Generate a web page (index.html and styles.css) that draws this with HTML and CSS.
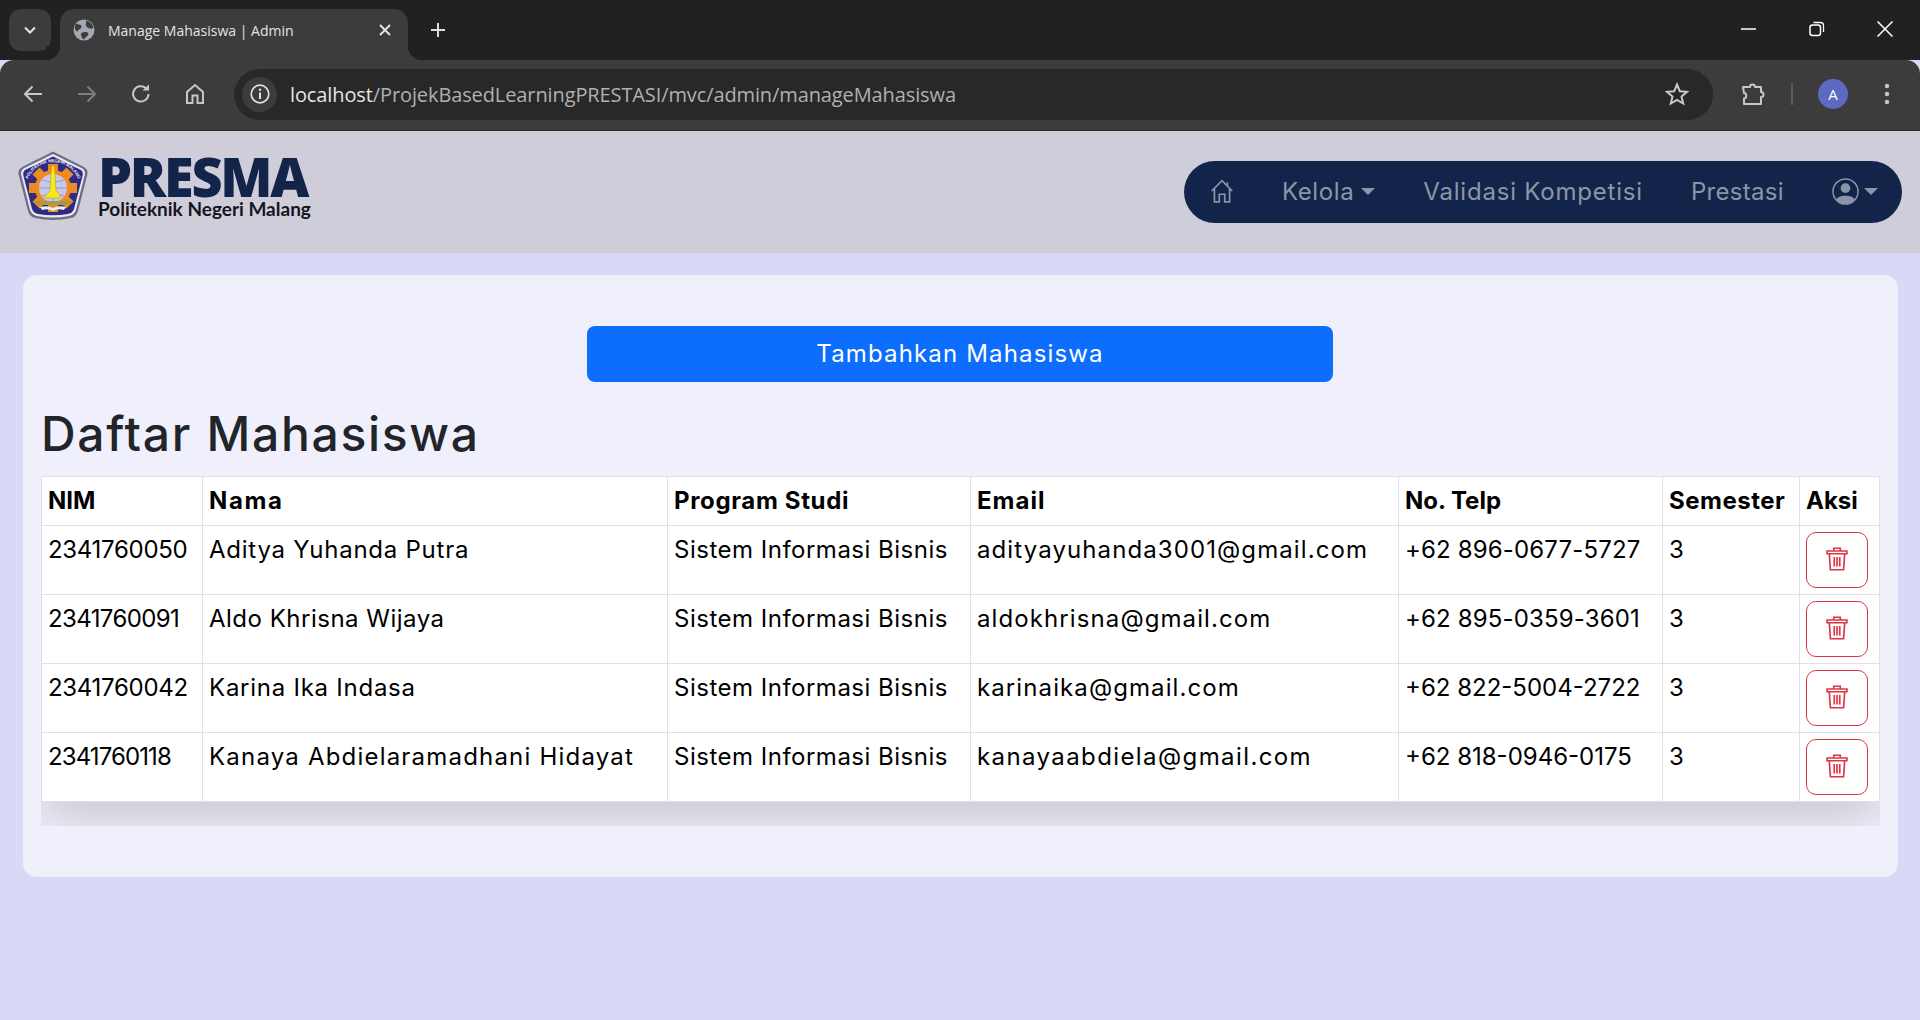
FILE: index.html
```html
<!DOCTYPE html>
<html lang="id">
<head>
<meta charset="utf-8">
<title>Manage Mahasiswa | Admin</title>
<link rel="stylesheet" href="styles.css">
</head>
<body>
<div class="tabstrip">
  <button class="tablist"><svg class="ico16" viewBox="0 0 16 16"><path d="M3 5.500 8 10.500 13 5.500" fill="none" stroke="#e6e6e6" stroke-width="2"/></svg></button>
  <div class="tab">
    <svg class="favicon" viewBox="0 0 22 22"><circle cx="11" cy="11" r="10.500" fill="#a3a9b2"/><path d="M3 4.500C6 6 8 5 8.500 7.500 9 10 5 10 4.500 12.500 2 12 1 8 3 4.500ZM13 1.500C16 2 20 5 20.500 9 17 10.500 14.500 9 13 7 12 5 14 3.500 13 1.500ZM8 14.500C11 12.500 15 12.500 15.500 15 15 17.500 12 18 11 20.500 9 20 8 17 8 14.500Z" fill="#3c3c3c"/></svg>
    <span class="tabtitle">Manage Mahasiswa | Admin</span>
    <svg class="tabclose" viewBox="0 0 14 14"><path d="M2 2 12 12M12 2 2 12" stroke="#e6e6e6" stroke-width="1.800"/></svg>
  </div>
  <svg class="newtab" viewBox="0 0 16 16"><path d="M8 1V15M1 8H15" stroke="#dcdcdc" stroke-width="2"/></svg>
  <div class="winctl">
    <svg class="winbtn" viewBox="0 0 16 16"><path d="M0 8H15" stroke="#fff" stroke-width="1.500"/></svg>
    <svg class="winbtn" viewBox="0 0 16 16"><rect x="1" y="4" width="10.500" height="10.500" rx="2.500" fill="none" stroke="#fff" stroke-width="1.500"/><path d="M4.500 1.500H11.500A3 3 0 0 1 14.500 4.500V11" fill="none" stroke="#fff" stroke-width="1.300"/></svg>
    <svg class="winbtn" viewBox="0 0 16 16"><path d="M.5.500 15.500 15.500M15.500.500 .5 15.500" stroke="#fff" stroke-width="1.500"/></svg>
  </div>
</div>
<div class="toolbar">
  <svg class="tool" viewBox="0 0 22 22"><path d="M20 11H3M10.500 3.500 3 11 10.500 18.500" fill="none" stroke="#c7c7c7" stroke-width="2"/></svg>
  <svg class="tool" viewBox="0 0 22 22"><path d="M2 11H19M11.500 3.500 19 11 11.500 18.500" fill="none" stroke="#7d7d7d" stroke-width="2"/></svg>
  <svg class="tool" viewBox="0 0 22 22"><path d="M18.500 11A7.700 7.700 0 1 1 16 5.200" fill="none" stroke="#c7c7c7" stroke-width="2"/><path d="M12.500 7.500H19V1.500Z" fill="#c7c7c7"/></svg>
  <svg class="tool" viewBox="0 0 22 22"><path d="M3 20V9L11 2 19 9V20H13.500V12.500H8.500V20Z" fill="none" stroke="#c7c7c7" stroke-width="2"/></svg>
  <div class="omnibox">
    <span class="chip"><svg class="chipico" viewBox="0 0 20 20"><circle cx="10" cy="10" r="8.800" fill="none" stroke="#e0e0e0" stroke-width="1.700"/><path d="M10 8.500V15" stroke="#e0e0e0" stroke-width="2"/><circle cx="10" cy="5.800" r="1.200" fill="#e0e0e0"/></svg></span>
    <span class="url"><span class="host">localhost</span>/ProjekBasedLearningPRESTASI/mvc/admin/manageMahasiswa</span>
    <svg class="star" viewBox="0 0 24 24"><path d="M12 2.500 14.800 9.200 22 9.800 16.500 14.500 18.200 21.500 12 17.800 5.800 21.500 7.500 14.500 2 9.800 9.200 9.200Z" fill="none" stroke="#c7c7c7" stroke-width="2"/></svg>
  </div>
  <svg class="ext" viewBox="0 0 24 24"><path d="M2 5H9A2.500 2.500 0 0 1 14 5H20V10A2.500 2.500 0 0 1 20 15V22H3V16.500C6 16.500 6 11 3 11Z" fill="none" stroke="#c7c7c7" stroke-width="2" stroke-linejoin="round"/></svg>
  <span class="tsep"></span>
  <span class="avatar">A</span>
  <svg class="dots" viewBox="0 0 6 24"><circle cx="3" cy="4" r="2.200" fill="#c7c7c7"/><circle cx="3" cy="12" r="2.200" fill="#c7c7c7"/><circle cx="3" cy="20" r="2.200" fill="#c7c7c7"/></svg>
</div>
<header class="navbar">
  <div class="brand">
    <svg class="emblem" viewBox="0 0 70 70">
      <path d="M35 .5 66 16Q71 19 69 25L60 60Q58 66 53 67 35 71 17 67 12 66 10 60L1 25Q-1 19 4 16Z" fill="#6f6c86"/>
      <path d="M35 3 64.500 17.500Q68 20 66.500 25L58 59Q56 64 51 65 35 68 19 65 14 64 12 59L3.500 25Q2 20 5.500 17.500Z" fill="#e8e8ee"/>
      <path d="M35 5.500 63 19Q65.500 21 64.500 25L56 58Q54.500 62 50 63 35 65.500 20 63 15.500 62 14 58L5.500 25Q4.500 21 7 19Z" fill="#2f2a85"/>
      <g fill="#ee8a22"><circle cx="35" cy="37" r="18"/><rect x="30" y="13" width="10" height="48"/><rect x="11" y="32" width="48" height="10"/><rect x="30" y="13" width="10" height="48" transform="rotate(45 35 37)"/><rect x="30" y="13" width="10" height="48" transform="rotate(-45 35 37)"/></g>
      <circle cx="35" cy="37" r="14" fill="#c9c8e8"/>
      <path d="M21 37H49M35 23V51M24 29Q35 33 46 29M24 45Q35 41 46 45" stroke="#8e8cc0" fill="none" stroke-width=".8"/>
      <path d="M33.500 16 35 14 36.500 16 38 40 42 44V47H28V44L32 40Z" fill="#f7ea1c" stroke="#a89a10" stroke-width=".5"/>
      <path d="M14 50H56L48 54H22Z" fill="#9da03c"/>
      <path d="M22 56Q30 54 35 57 40 54 48 56L46 59Q40 57 35 60 30 57 24 59Z" fill="#f0f0f0"/>
      <path id="arc" d="M10 28A27 27 0 0 1 60 28" fill="none"/>
      <text class="emblemtext"><textPath href="#arc" startOffset="50%" text-anchor="middle">POLITEKNIK NEGERI MALANG</textPath></text>
    </svg>
    <div class="brandtext">
      <div class="presma">PRESMA</div>
      <div class="poltek">Politeknik Negeri Malang</div>
    </div>
  </div>
  <nav class="pill">
    <svg class="navhome" viewBox="0 0 24 24"><path d="M2.500 12 12 2.500 21.500 12M5 10V22H9.500V15H14.500V22H19V10M17 4V7" fill="none" stroke="#8b95a8" stroke-width="1.600"/></svg>
    <a class="navlink kelola">Kelola<i class="caret"></i></a>
    <a class="navlink validasi">Validasi Kompetisi</a>
    <a class="navlink prestasi">Prestasi</a>
    <span class="navuser">
      <svg class="usericon" viewBox="0 0 28 28"><circle cx="14" cy="14" r="13" fill="none" stroke="#8b95a8" stroke-width="1.500"/><circle cx="14" cy="10.500" r="5" fill="#8b95a8"/><path d="M4.500 22.500C6 17 22 17 23.500 22.500A13 13 0 0 1 4.500 22.500Z" fill="#8b95a8"/></svg><i class="caret"></i>
    </span>
  </nav>
</header>
<main class="content">
  <section class="card">
    <a class="addbtn">Tambahkan Mahasiswa</a>
    <h1 class="title">Daftar Mahasiswa</h1>
    <div class="tablewrap">
      <table class="grid">
        <colgroup><col class="c1"><col class="c2"><col class="c3"><col class="c4"><col class="c5"><col class="c6"><col class="c7"></colgroup>
        <thead><tr><th class="ls0">NIM</th><th class="ls16">Nama</th><th class="ls6">Program Studi</th><th class="ls10">Email</th><th class="ls0">No. Telp</th><th class="ls5">Semester</th><th class="ls0">Aksi</th></tr></thead>
        <tbody>
          <tr><td class="lsm">2341760050</td><td class="ls8">Aditya Yuhanda Putra</td><td class="ls5">Sistem Informasi Bisnis</td><td class="ls11">adityayuhanda3001@gmail.com</td><td class="ls1">+62 896-0677-5727</td><td>3</td><td><button class="del"><svg class="trash" viewBox="0 1.500 20 21.500"><path d="M1 5H19V7.500H1ZM7 5V2.500H13V5M3 7.500 4 22H16L17 7.500M7.500 10.500V19M10 10.500V19M12.500 10.500V19" fill="none" stroke="#dc3545" stroke-width="1.500"/></svg></button></td></tr>
          <tr><td class="lsm2">2341760091</td><td class="ls5">Aldo Khrisna Wijaya</td><td class="ls5">Sistem Informasi Bisnis</td><td class="ls11">aldokhrisna@gmail.com</td><td class="ls1">+62 895-0359-3601</td><td>3</td><td><button class="del"><svg class="trash" viewBox="0 1.500 20 21.500"><path d="M1 5H19V7.500H1ZM7 5V2.500H13V5M3 7.500 4 22H16L17 7.500M7.500 10.500V19M10 10.500V19M12.500 10.500V19" fill="none" stroke="#dc3545" stroke-width="1.500"/></svg></button></td></tr>
          <tr><td class="lsm">2341760042</td><td class="ls8">Karina Ika Indasa</td><td class="ls5">Sistem Informasi Bisnis</td><td class="ls11">karinaika@gmail.com</td><td class="ls0">+62 822-5004-2722</td><td>3</td><td><button class="del"><svg class="trash" viewBox="0 1.500 20 21.500"><path d="M1 5H19V7.500H1ZM7 5V2.500H13V5M3 7.500 4 22H16L17 7.500M7.500 10.500V19M10 10.500V19M12.500 10.500V19" fill="none" stroke="#dc3545" stroke-width="1.500"/></svg></button></td></tr>
          <tr><td class="lsm3">2341760118</td><td class="ls12">Kanaya Abdielaramadhani Hidayat</td><td class="ls5">Sistem Informasi Bisnis</td><td class="ls14">kanayaabdiela@gmail.com</td><td class="ls0">+62 818-0946-0175</td><td>3</td><td><button class="del"><svg class="trash" viewBox="0 1.500 20 21.500"><path d="M1 5H19V7.500H1ZM7 5V2.500H13V5M3 7.500 4 22H16L17 7.500M7.500 10.500V19M10 10.500V19M12.500 10.500V19" fill="none" stroke="#dc3545" stroke-width="1.500"/></svg></button></td></tr>
        </tbody>
      </table>
    </div>
  </section>
</main>
</body>
</html>
```
FILE: styles.css
```css
* { box-sizing: border-box; }
html, body { margin: 0; height: 100%; }
body { display: flex; flex-direction: column; height: 1020px; overflow: hidden; background: #d9d8f7; font-family: Inter, "Noto Sans", sans-serif; color: #000; }

.tabstrip { height: 60px; flex: none; background: #202221; display: flex; align-items: flex-start; padding: 9px 0 0 9px; }
.tablist { width: 42px; height: 42px; border: 0; border-radius: 12px; background: #3c3c3c; display: flex; align-items: center; justify-content: center; padding: 0; }
.ico16 { width: 16px; height: 16px; }
.tab { position: relative; margin-left: 9px; width: 348px; height: 51px; background: #3c3c3c; border-radius: 14px 14px 0 0; display: flex; align-items: center; padding: 0 16px 9px 13px; }
.tab::before, .tab::after { content: ""; position: absolute; bottom: 0; width: 14px; height: 14px; }
.tab::before { left: -14px; background: radial-gradient(circle at 0 0, #202221 14px, #3c3c3c 14.500px); }
.tab::after { right: -14px; background: radial-gradient(circle at 100% 0, #202221 14px, #3c3c3c 14.500px); }
.favicon { width: 22px; height: 22px; flex: none; }
.tabtitle { margin-left: 13px; flex: 1; font: 14px "Open Sans", sans-serif; color: #e3e3e3; white-space: nowrap; }
.tabclose { width: 14px; height: 14px; flex: none; }
.newtab { width: 16px; height: 16px; margin: 13px 0 0 22px; }
.winctl { margin-left: auto; display: flex; gap: 52px; padding: 12px 27px 0 0; }
.winbtn { width: 16px; height: 16px; }

.toolbar { height: 71px; flex: none; background: #3c3c3c; border-radius: 14px 14px 0 0; display: flex; align-items: center; padding: 0 25px 2px 22px; border-bottom: 1px solid #2b2b2b; }
.tool { width: 22px; height: 22px; flex: none; margin-right: 32px; }
.omnibox { flex: none; width: 1479px; height: 51px; margin-left: -4px; background: #282828; border-radius: 26px; display: flex; align-items: center; padding: 0 24px 0 8px; }
.chip { width: 35px; height: 35px; border-radius: 50%; background: #3c3c3c; display: flex; align-items: center; justify-content: center; flex: none; }
.chipico { width: 20px; height: 20px; }
.url { margin-left: 13px; flex: 1; font: 20px "Open Sans", sans-serif; letter-spacing: -.11px; color: #b0b0b0; white-space: nowrap; }
.host { color: #e6e6e6; }
.star { width: 24px; height: 24px; flex: none; }
.ext { width: 24px; height: 24px; flex: none; margin-left: 28px; }
.tsep { width: 2px; height: 22px; background: #5c5c5c; margin-left: 26px; flex: none; }
.avatar { width: 30px; height: 30px; border-radius: 50%; background: #5c6bc0; color: #fff; font: 15px "Open Sans", sans-serif; display: flex; align-items: center; justify-content: center; margin-left: 25px; flex: none; }
.dots { width: 6px; height: 24px; margin-left: 36px; flex: none; }

.navbar { height: 122px; flex: none; background: #d0cddb; display: flex; align-items: center; justify-content: space-between; padding: 0 18px; }
.brand { display: flex; align-items: center; gap: 10px; padding-bottom: 12px; }
.emblem { width: 70px; height: 70px; flex: none; }
.emblemtext { font: 700 4.300px "Liberation Sans", sans-serif; fill: #f2f2f2; }
.brandtext { display: flex; flex-direction: column; margin-top: 4px; }
.presma { font: 800 54px/41px "Open Sans", sans-serif; color: #12244a; letter-spacing: -2.300px; }
.poltek { font: 700 19px/22px Lato, sans-serif; color: #15151d; margin-top: 1px; }
.pill { width: 718px; height: 62px; background: #12244a; border-radius: 31px; display: flex; align-items: center; padding: 0 24px 2px 25px; }
.navhome { width: 26px; height: 26px; flex: none; }
.navlink { font: 24px Inter, sans-serif; color: #8b95a8; white-space: nowrap; margin-left: 48px; display: flex; align-items: center; }
.kelola { margin-left: 47px; letter-spacing: .6px; }
.validasi { letter-spacing: .8px; }
.prestasi { letter-spacing: .3px; }
.caret { display: block; width: 0; height: 0; border-left: 7px solid transparent; border-right: 7px solid transparent; border-top: 7px solid #8b95a8; margin-left: 7px; }
.navuser { margin-left: auto; display: flex; align-items: center; }
.usericon { width: 27px; height: 27px; }
.navuser .caret { margin-left: 5px; }

.content { flex: 1; padding: 22px 22px 0 23px; }
.card { height: 602px; background: #f0f0fc; border-radius: 14px; padding: 51px 18px 0; }
.addbtn { display: block; width: 746px; height: 56px; margin-left: 546px; background: #0d6efd; border-radius: 8px; color: #fff; font-size: 24px; letter-spacing: 1.150px; line-height: 56px; text-align: center; }
.title { margin: 23px 0 13px; font-size: 48px; line-height: 58px; font-weight: 500; letter-spacing: 1.700px; color: #212529; }
.tablewrap { height: 350px; overflow: hidden; }
.grid { width: 1838px; table-layout: fixed; border-collapse: collapse; background: #fff; box-shadow: 0 16px 48px rgba(0,0,0,.175); font-size: 24px; line-height: 36px; }
.grid th, .grid td { border: 1px solid #dee2e6; padding: 6px; text-align: left; vertical-align: top; white-space: nowrap; overflow: hidden; }
.grid th { font-weight: 700; }
.ls0 { letter-spacing: 0; } .ls1 { letter-spacing: .15px; } .ls5 { letter-spacing: .5px; } .ls6 { letter-spacing: .65px; } .ls8 { letter-spacing: .75px; } .ls10 { letter-spacing: 1px; } .ls11 { letter-spacing: 1.100px; } .ls12 { letter-spacing: 1.200px; } .ls14 { letter-spacing: 1.400px; } .ls16 { letter-spacing: 1.600px; }
.lsm { letter-spacing: -.3px; } .lsm2 { letter-spacing: -.6px; } .lsm3 { letter-spacing: -.9px; }
.c1 { width: 161px; } .c2 { width: 465px; } .c3 { width: 303px; } .c4 { width: 428px; } .c5 { width: 264px; } .c6 { width: 137px; } .c7 { width: 80px; }
.del { width: 62px; height: 56px; border: 1px solid #dc3545; border-radius: 10px; background: transparent; padding: 0; display: flex; align-items: center; justify-content: center; }
.trash { width: 22px; height: 24px; margin-bottom: 2px; }
```
